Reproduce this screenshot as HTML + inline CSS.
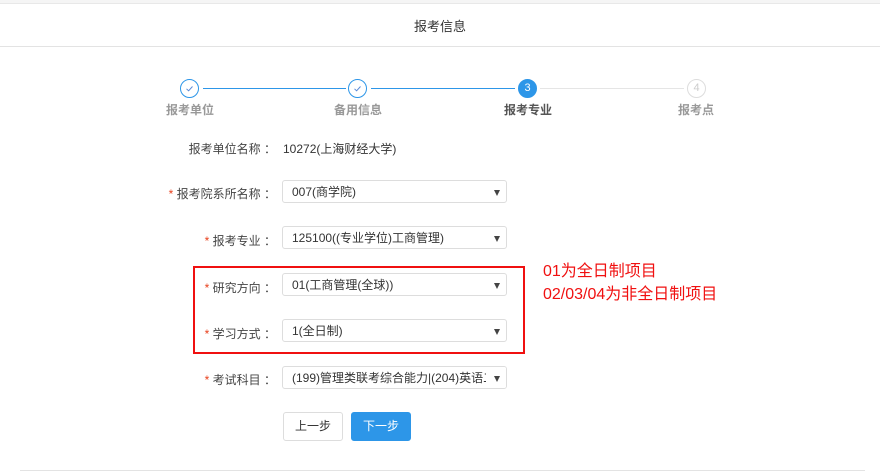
<!DOCTYPE html>
<html><head><meta charset="utf-8"><style>
*{margin:0;padding:0;box-sizing:border-box}
body{width:880px;height:473px;background:#fff;font-family:"Liberation Sans","Noto Sans CJK SC",sans-serif;font-size:12px;color:#333;position:relative;overflow:hidden}
.abs{position:absolute}
.top{left:0;top:0;width:880px;height:4px;background:#f5f5f5;border-bottom:1px solid #e8e8e8}
.hdr{left:0;top:16px;width:880px;text-align:center;font-size:13px;color:#333}
.hl{left:0;top:46px;width:880px;height:1px;background:#e3e3e3}
.c{width:19px;height:19px;border-radius:50%;text-align:center;line-height:17px;font-size:11px}
.done{border:1px solid #2d96e8;color:#2d96e8;background:#fff}
.act{background:#2d96e8;color:#fff;border:1px solid #2d96e8}
.todo{border:1px solid #ddd;color:#ccc;background:#fff}
.ln{height:1px;top:88px}
.sl{font-size:12px;font-weight:bold;color:#999;top:101px;width:80px;text-align:center}
.lab{width:276px;left:0;text-align:right;color:#444;font-size:12px}
.lab b{color:#e8401c;font-weight:normal}
.sel{left:282px;width:225px;height:23px;border:1px solid #ddd;border-radius:3px;padding-left:9px;line-height:23px;color:#333;font-size:12px;white-space:nowrap;overflow:hidden;background:#fff}
.sel:after{content:"";position:absolute;right:6px;top:9px;border-left:3.5px solid transparent;border-right:3.5px solid transparent;border-top:6px solid #444}
.sel span{position:absolute;right:0;top:0;width:20px;height:21px;background:#fff}
.btn{top:412px;width:60px;height:29px;border-radius:3px;text-align:center;line-height:27px;font-size:12px}
</style></head><body>
<div class="abs top"></div>
<div class="abs hdr">报考信息</div>
<div class="abs hl"></div>

<div class="abs ln" style="left:203px;width:143px;background:#2d96e8"></div>
<div class="abs ln" style="left:371px;width:144px;background:#2d96e8"></div>
<div class="abs ln" style="left:540px;width:144px;background:#e5e5e5"></div>
<div class="abs c done" style="left:180px;top:79px"><svg width="17" height="17" viewBox="0 0 17 17"><path d="M5.5 8.8 L7.6 10.8 L11.5 6.5" fill="none" stroke="#5a8ad8" stroke-width="1"/></svg></div>
<div class="abs c done" style="left:348px;top:79px"><svg width="17" height="17" viewBox="0 0 17 17"><path d="M5.5 8.8 L7.6 10.8 L11.5 6.5" fill="none" stroke="#5a8ad8" stroke-width="1"/></svg></div>
<div class="abs c act" style="left:518px;top:79px">3</div>
<div class="abs c todo" style="left:687px;top:79px">4</div>
<div class="abs sl" style="left:150px">报考单位</div>
<div class="abs sl" style="left:318px">备用信息</div>
<div class="abs sl" style="left:488px;color:#555">报考专业</div>
<div class="abs sl" style="left:656px">报考点</div>

<div class="abs lab" style="top:140px">报考单位名称 ：</div>
<div class="abs" style="left:283px;top:140px;color:#333">10272(上海财经大学)</div>

<div class="abs lab" style="top:185px"><b>*</b> 报考院系所名称 ：</div>
<div class="abs sel" style="top:180px">007(商学院)</div>
<div class="abs lab" style="top:232px"><b>*</b> 报考专业 ：</div>
<div class="abs sel" style="top:226px">125100((专业学位)工商管理)</div>
<div class="abs lab" style="top:279px"><b>*</b> 研究方向 ：</div>
<div class="abs sel" style="top:273px">01(工商管理(全球))</div>
<div class="abs lab" style="top:325px"><b>*</b> 学习方式 ：</div>
<div class="abs sel" style="top:319px">1(全日制)</div>
<div class="abs lab" style="top:371px"><b>*</b> 考试科目 ：</div>
<div class="abs sel" style="top:366px">(199)管理类联考综合能力|(204)英语二<span></span></div>

<div class="abs" style="left:193px;top:266px;width:332px;height:88px;border:2px solid #f01010"></div>
<div class="abs" style="left:543px;top:260px;color:#f01010;font-size:16px;line-height:23px">01为全日制项目<br>02/03/04为非全日制项目</div>

<div class="abs btn" style="left:283px;border:1px solid #ddd;color:#333">上一步</div>
<div class="abs btn" style="left:351px;background:#2d96e8;color:#fff;border:1px solid #2d96e8">下一步</div>
<div class="abs" style="left:20px;top:470px;width:845px;height:1px;background:#e3e3e3"></div>
</body></html>
